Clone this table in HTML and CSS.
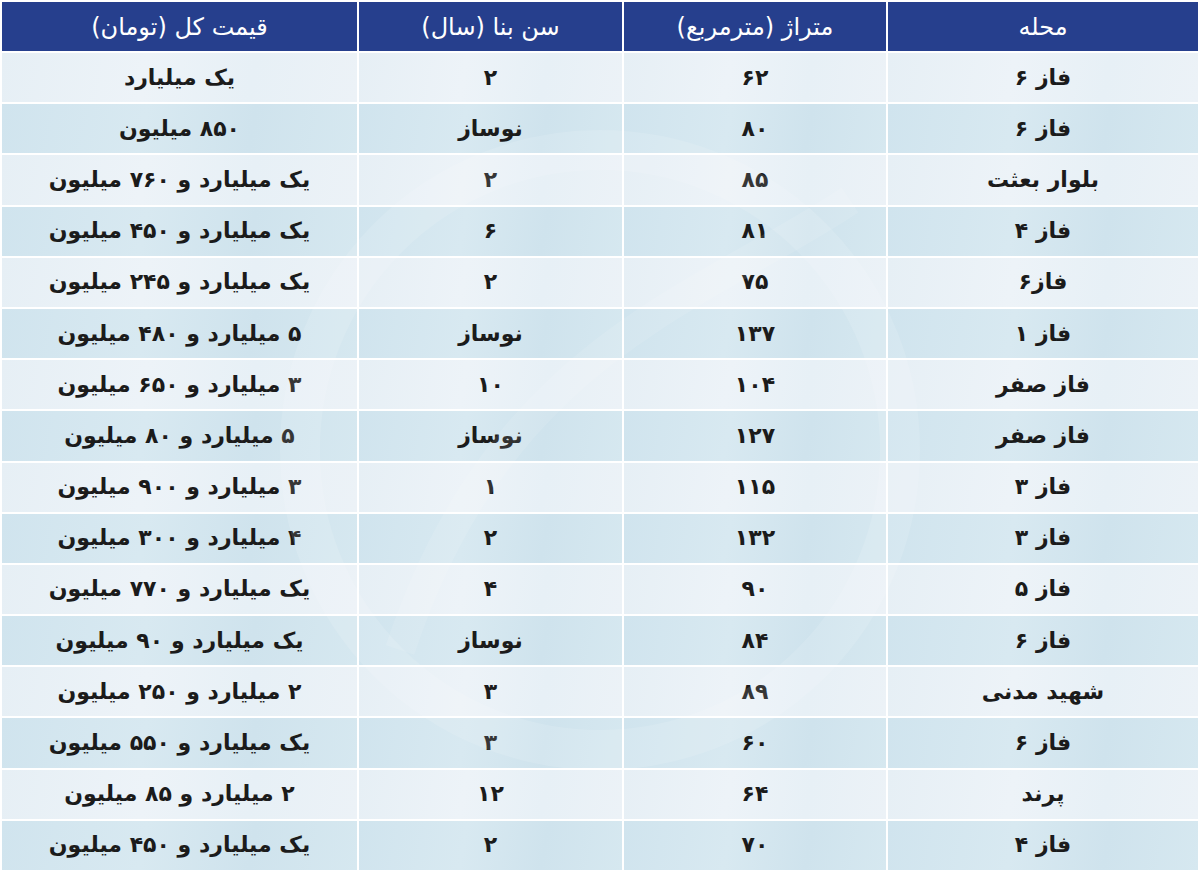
FILE: index.html
```html
<!DOCTYPE html>
<html lang="fa" dir="rtl">
<head>
<meta charset="utf-8">
<title>قیمت آپارتمان</title>
<link rel="stylesheet" href="styles.css">
</head>
<body>
<div class="wrap">
<svg class="watermark" viewBox="0 0 700 800" aria-hidden="true">
  <circle cx="350" cy="400" r="300" fill="none" stroke="#ffffff" stroke-width="40" opacity="0.12"/>
  <path d="M150 600 C 250 300, 450 250, 600 150" fill="none" stroke="#ffffff" stroke-width="30" opacity="0.1"/>
</svg>
<table class="prices">
  <colgroup>
    <col class="c-area-name">
    <col class="c-size">
    <col class="c-age">
    <col class="c-price">
  </colgroup>
  <thead>
    <tr><th>محله</th><th>متراژ (مترمربع)</th><th>سن بنا (سال)</th><th>قیمت کل (تومان)</th></tr>
  </thead>
  <tbody>
    <tr><td>فاز ۶</td><td>۶۲</td><td>۲</td><td>یک میلیارد</td></tr>
    <tr><td>فاز ۶</td><td>۸۰</td><td>نوساز</td><td>۸۵۰ میلیون</td></tr>
    <tr><td>بلوار بعثت</td><td>۸۵</td><td>۲</td><td>یک میلیارد و ۷۶۰ میلیون</td></tr>
    <tr><td>فاز ۴</td><td>۸۱</td><td>۶</td><td>یک میلیارد و ۴۵۰ میلیون</td></tr>
    <tr><td>فاز۶</td><td>۷۵</td><td>۲</td><td>یک میلیارد و ۲۴۵ میلیون</td></tr>
    <tr><td>فاز ۱</td><td>۱۳۷</td><td>نوساز</td><td>۵ میلیارد و ۴۸۰ میلیون</td></tr>
    <tr><td>فاز صفر</td><td>۱۰۴</td><td>۱۰</td><td>۳ میلیارد و ۶۵۰ میلیون</td></tr>
    <tr><td>فاز صفر</td><td>۱۲۷</td><td>نوساز</td><td>۵ میلیارد و ۸۰ میلیون</td></tr>
    <tr><td>فاز ۳</td><td>۱۱۵</td><td>۱</td><td>۳ میلیارد و ۹۰۰ میلیون</td></tr>
    <tr><td>فاز ۳</td><td>۱۳۲</td><td>۲</td><td>۴ میلیارد و ۳۰۰ میلیون</td></tr>
    <tr><td>فاز ۵</td><td>۹۰</td><td>۴</td><td>یک میلیارد و ۷۷۰ میلیون</td></tr>
    <tr><td>فاز ۶</td><td>۸۴</td><td>نوساز</td><td>یک میلیارد و ۹۰ میلیون</td></tr>
    <tr><td>شهید مدنی</td><td>۸۹</td><td>۳</td><td>۲ میلیارد و ۲۵۰ میلیون</td></tr>
    <tr><td>فاز ۶</td><td>۶۰</td><td>۳</td><td>یک میلیارد و ۵۵۰ میلیون</td></tr>
    <tr><td>پرند</td><td>۶۴</td><td>۱۲</td><td>۲ میلیارد و ۸۵ میلیون</td></tr>
    <tr><td>فاز ۴</td><td>۷۰</td><td>۲</td><td>یک میلیارد و ۴۵۰ میلیون</td></tr>
  </tbody>
</table>
</div>
</body>
</html>
```

FILE: styles.css
```css
html, body {
  margin: 0;
  padding: 0;
  background: #ffffff;
}

body {
  font-family: "DejaVu Sans", "Noto Sans", sans-serif;
  width: 1200px;
  height: 873px;
  overflow: hidden;
}

.wrap {
  position: relative;
  width: 1200px;
}

.prices {
  width: 1200px;
  table-layout: fixed;
  border-collapse: separate;
  border-spacing: 2px;
  direction: rtl;
}

.c-area-name { width: 310px; }
.c-size { width: 262px; }
.c-age { width: 263px; }
.c-price { width: 355px; }

.prices th {
  height: 49px;
  padding: 0;
  background: #263f8d;
  color: #ffffff;
  font-weight: normal;
  font-size: 24px;
  line-height: 28px;
  text-align: center;
  vertical-align: middle;
}

.prices td {
  height: 49.2px;
  padding: 0;
  color: #1b1b1b;
  font-weight: bold;
  font-size: 22px;
  line-height: 28px;
  text-align: center;
  vertical-align: middle;
}

.prices tbody tr:nth-child(odd) td {
  background: linear-gradient(100deg, #e6eff5 0%, #edf3f8 40%, #e7f0f6 70%, #ecf2f7 100%);
}

.prices tbody tr:nth-child(even) td {
  background: linear-gradient(100deg, #d0e4ee 0%, #d8e9f1 40%, #cfe3ed 70%, #d6e8f0 100%);
}

.watermark {
  position: absolute;
  left: 250px;
  top: 50px;
  width: 700px;
  height: 800px;
  pointer-events: none;
  z-index: 1;
}
```
